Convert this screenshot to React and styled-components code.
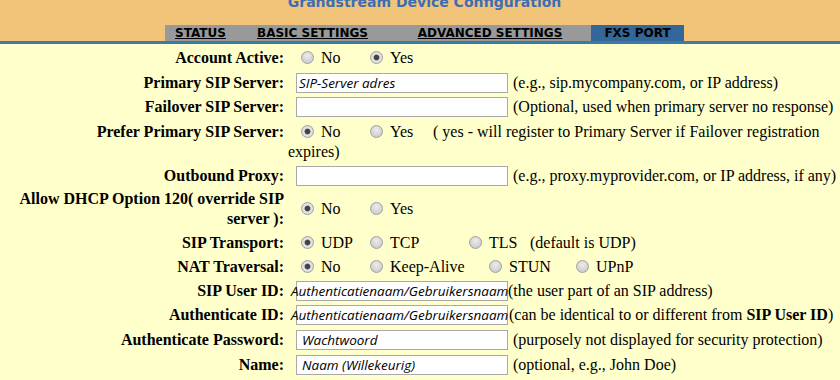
import React from "react"
import styled, { createGlobalStyle } from "styled-components"

const tabs = [
  { label: "STATUS", width: 71 },
  { label: "BASIC SETTINGS", width: 153 },
  { label: "ADVANCED SETTINGS", width: 202 },
  { label: "FXS PORT", width: 93, active: true },
]

const App = () => {
  return (
    <>
      <GlobalStyle />

      <Header>
        <Title>Grandstream Device Configuration</Title>
        <TabBar>
          {tabs.map(tab => (
            <Tab key={tab.label} width={tab.width} active={tab.active}>
              {tab.label}
            </Tab>
          ))}
        </TabBar>
      </Header>

      <Form>
        <Row h={24}>
          <Label>Account Active:</Label>
          <Choices>
            <Option w={69}><Radio />No</Option>
            <Option><Radio checked />Yes</Option>
          </Choices>
        </Row>

        <Row h={25}>
          <Label>Primary SIP Server:</Label>
          <Value>
            <Field pad={2}>SIP-Server adres</Field>
            <Hint>(e.g., sip.mycompany.com, or IP address)</Hint>
          </Value>
        </Row>

        <Row h={24}>
          <Label>Failover SIP Server:</Label>
          <Value>
            <Field />
            <Hint>(Optional, used when primary server no response)</Hint>
          </Value>
        </Row>

        <Row h={45} top>
          <Label>Prefer Primary SIP Server:</Label>
          <Choices>
            <Option w={69}><Radio checked />No</Option>
            <Option w={63}><Radio />Yes</Option>
            ( yes - will register to Primary Server if Failover registration expires)
          </Choices>
        </Row>

        <Row h={23}>
          <Label>Outbound Proxy:</Label>
          <Value>
            <Field />
            <Hint>(e.g., proxy.myprovider.com, or IP address, if any)</Hint>
          </Value>
        </Row>

        <Row h={44}>
          <Label>Allow DHCP Option 120( override SIP server ):</Label>
          <Choices>
            <Option w={69}><Radio checked />No</Option>
            <Option><Radio />Yes</Option>
          </Choices>
        </Row>

        <Row h={23}>
          <Label>SIP Transport:</Label>
          <Choices>
            <Option w={69}><Radio checked />UDP</Option>
            <Option w={99}><Radio />TCP</Option>
            <Option w={61}><Radio />TLS</Option>
            (default is UDP)
          </Choices>
        </Row>

        <Row h={25}>
          <Label>NAT Traversal:</Label>
          <Choices>
            <Option w={69}><Radio checked />No</Option>
            <Option w={119}><Radio />Keep-Alive</Option>
            <Option w={87}><Radio />STUN</Option>
            <Option><Radio />UPnP</Option>
          </Choices>
        </Row>

        <Row h={24}>
          <Label>SIP User ID:</Label>
          <Value>
            <Field indent={-6}>Authenticatienaam/Gebruikersnaam</Field>
            <Hint gap={0}>(the user part of an SIP address)</Hint>
          </Value>
        </Row>

        <Row h={24}>
          <Label>Authenticate ID:</Label>
          <Value>
            <Field indent={-6}>Authenticatienaam/Gebruikersnaam</Field>
            <Hint gap={1}>
              (can be identical to or different from <b>SIP User ID</b>)
            </Hint>
          </Value>
        </Row>

        <Row h={25}>
          <Label>Authenticate Password:</Label>
          <Value>
            <Field pad={5}>Wachtwoord</Field>
            <Hint>(purposely not displayed for security protection)</Hint>
          </Value>
        </Row>

        <Row h={26}>
          <Label>Name:</Label>
          <Value>
            <Field pad={5}>Naam (Willekeurig)</Field>
            <Hint>(optional, e.g., John Doe)</Hint>
          </Value>
        </Row>
      </Form>
    </>
  )
}

// Styled Components
const GlobalStyle = createGlobalStyle`
  html, body {
    margin: 0;
    padding: 0;
  }
  body {
    width: 840px;
    height: 380px;
    overflow: hidden;
    background: #ffffcc;
    color: #000;
    font-family: "Liberation Serif", "Times New Roman", serif;
    font-size: 16px;
  }
`

const Header = styled.header`
  height: 44px;
  box-sizing: border-box;
  padding-left: 9px;
  display: flex;
  flex-direction: column;
  align-items: center;
  background: #f2c47a;
  border-bottom: 3px solid #3b7ca6;
`

const Title = styled.h1`
  margin: -6px 0 0;
  font-family: "DejaVu Sans", Verdana, sans-serif;
  font-size: 14px;
  line-height: 16px;
  font-weight: bold;
  color: #3d6eb4;
  white-space: nowrap;
`

const TabBar = styled.nav`
  margin-top: 15px;
  display: flex;
  background: #999999;
`

const Tab = styled.a`
  width: ${({ width }) => width}px;
  height: 16px;
  text-align: center;
  font-family: "DejaVu Sans", Verdana, sans-serif;
  font-size: 12px;
  line-height: 17px;
  font-weight: bold;
  color: #000;
  white-space: nowrap;
  text-decoration: ${({ active }) => (active ? "none" : "underline")};
  background: ${({ active }) => (active ? "#336699" : "transparent")};
  cursor: pointer;
`

const Form = styled.main`
  padding-top: 2px;
  display: flex;
  flex-direction: column;
`

const Row = styled.div`
  height: ${({ h }) => h}px;
  box-sizing: border-box;
  padding: ${({ top }) => (top ? "3px" : "0")} 0 0 16px;
  display: grid;
  grid-template-columns: 268px 1fr;
  column-gap: 4px;
  align-items: ${({ top }) => (top ? "start" : "center")};
`

const Label = styled.div`
  text-align: right;
  font-weight: bold;
  line-height: 20px;
`

const Value = styled.div`
  display: flex;
  align-items: center;
  white-space: nowrap;
`

const Choices = styled.div`
  line-height: 20px;
`

const Option = styled.span`
  display: inline-block;
  width: ${({ w }) => (w ? `${w}px` : "auto")};
  white-space: nowrap;

  &:first-child {
    margin-left: 13px;
  }
`

const Radio = styled.span`
  display: inline-block;
  width: 13px;
  height: 13px;
  box-sizing: border-box;
  margin-right: 7px;
  vertical-align: -1px;
  border-radius: 50%;
  border: 1px solid #a0a0a0;
  background: ${({ checked }) =>
    checked
      ? "radial-gradient(circle, #444 0 2.2px, #888 2.8px, #e6e6e6 3.4px, #d2d2d2 100%)"
      : "radial-gradient(circle at 50% 35%, #ececec 0, #d0d0d0 70%, #c4c4c4 100%)"};
`

const Field = styled.div`
  width: 212px;
  height: 20px;
  box-sizing: border-box;
  margin-left: 8px;
  padding-left: ${({ pad }) => pad || 0}px;
  text-indent: ${({ indent }) => indent || 0}px;
  display: flex;
  align-items: center;
  background: #fff;
  border: 1px solid #a9a9a9;
  font-family: "Open Sans", "Segoe UI", sans-serif;
  font-style: italic;
  font-size: 13.5px;
  color: #000;
  white-space: nowrap;
  overflow: visible;
`

const Hint = styled.span`
  margin-left: ${({ gap }) => (gap === undefined ? 5 : gap)}px;
  line-height: 20px;
`

export default App
